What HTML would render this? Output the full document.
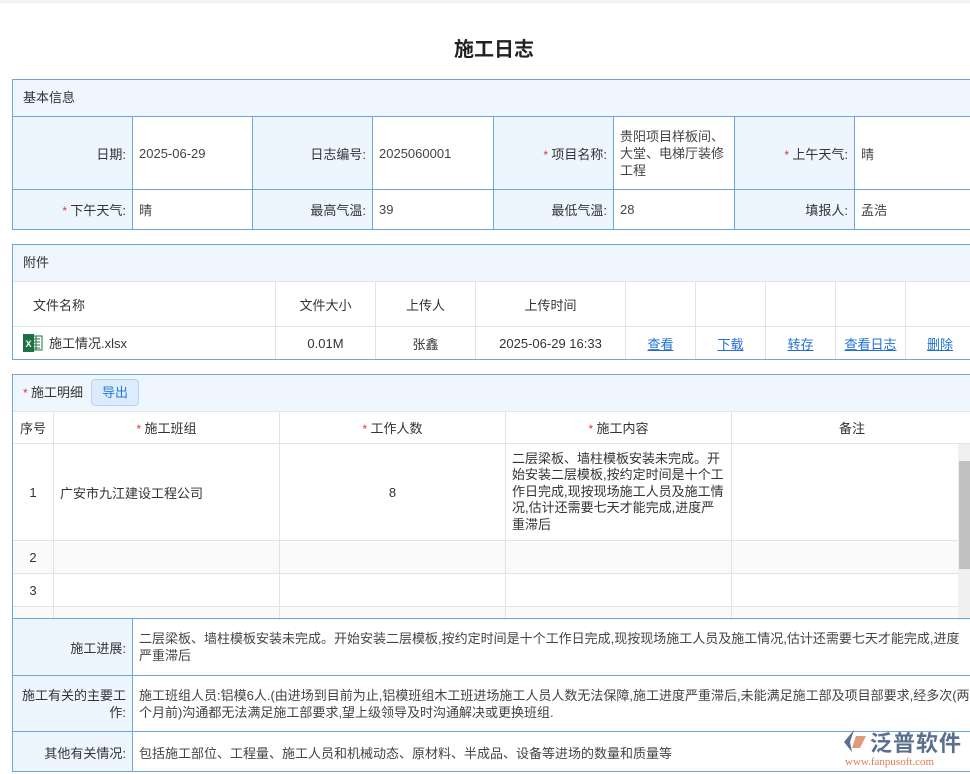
<!DOCTYPE html>
<html><head><meta charset="utf-8"><style>
*{box-sizing:border-box;margin:0;padding:0}
body{width:970px;height:774px;overflow:hidden;background:#fff;font-family:"Liberation Sans","Noto Sans CJK SC",sans-serif;font-size:13px;color:#333;position:relative}
.a{position:absolute}
.topbar{left:0;top:0;width:970px;height:3px;background:#f0f4f8}
h1{position:absolute;left:0;width:988px;top:33px;text-align:center;font-size:20px;font-weight:bold;color:#222}
.box{position:absolute;left:12px;width:962px;border:1px solid #6fa5dc;overflow:hidden}
.hd{background:#eff6fe;height:37px;line-height:36px;padding-left:10px;border-bottom:1px solid #6fa5dc}
table{border-collapse:collapse;table-layout:fixed}
td{border:1px solid #6fa5dc;vertical-align:middle}
.l{background:#edf5fe;text-align:right;padding-right:6px}
.v{padding-left:6px;color:#444}
.s{color:#e33;font-size:12px}
.t2 td{border:1px solid #e3e3e3;text-align:center}
.lk{color:#1f6fd6;text-decoration:underline}
.t3 td{border:1px solid #e3e3e3}
</style></head><body>
<div class="a topbar"></div>
<h1>施工日志</h1>

<div class="box" style="top:79px;height:151px">
<div class="hd">基本信息</div>
<table style="margin:-1px 0 0 -1px;width:960px">
<colgroup><col style="width:120px"><col style="width:120px"><col style="width:120px"><col style="width:121px"><col style="width:120px"><col style="width:121px"><col style="width:120px"><col style="width:118px"></colgroup>
<tr style="height:73px"><td class="l">日期:</td><td class="v">2025-06-29</td><td class="l">日志编号:</td><td class="v">2025060001</td><td class="l"><span class="s">* </span>项目名称:</td><td class="v" style="line-height:17px">贵阳项目样板间、大堂、电梯厅装修工程</td><td class="l"><span class="s">* </span>上午天气:</td><td class="v">晴</td></tr>
<tr style="height:40px"><td class="l"><span class="s">* </span>下午天气:</td><td class="v">晴</td><td class="l">最高气温:</td><td class="v">39</td><td class="l">最低气温:</td><td class="v">28</td><td class="l">填报人:</td><td class="v">孟浩</td></tr>
</table></div>

<div class="box" style="top:244px;height:116px">
<div class="hd">附件</div>
<table class="t2" style="margin:-1px 0 0 -1px;width:962px">
<colgroup><col style="width:263px"><col style="width:100px"><col style="width:100px"><col style="width:150px"><col style="width:70px"><col style="width:70px"><col style="width:70px"><col style="width:70px"><col style="width:69px"></colgroup>
<tr style="height:45px"><td style="text-align:left;padding-left:20px">文件名称</td><td>文件大小</td><td>上传人</td><td>上传时间</td><td></td><td></td><td></td><td></td><td></td></tr>
<tr style="height:33px"><td style="text-align:left;padding-left:10px"><svg width="20" height="20" viewBox="0 0 20 20" style="vertical-align:-5px;margin-right:6px"><rect x="7" y="3" width="12" height="14" fill="#fff" stroke="#1e7145"/><path d="M9 6h8M9 9h8M9 12h8M9 15h8M13 3v14" stroke="#1e7145" stroke-width="1"/><rect x="0" y="1" width="11" height="18" fill="#1e7145"/><text x="5.5" y="14" font-size="9" fill="#fff" text-anchor="middle" font-family="Liberation Sans" font-weight="bold">X</text></svg>施工情况.xlsx</td><td>0.01M</td><td>张鑫</td><td>2025-06-29 16:33</td><td><span class="lk">查看</span></td><td><span class="lk">下载</span></td><td><span class="lk">转存</span></td><td><span class="lk">查看日志</span></td><td><span class="lk">删除</span></td></tr>
</table></div>

<div class="box" style="top:374px;height:246px;border-bottom:none">
<div class="hd" style="border-bottom:1px solid #e3e3e3"><span class="s">* </span>施工明细<span style="display:inline-block;margin-left:8px;height:27px;line-height:25px;padding:0 10px;background:#dcecfc;border:1px solid #b7d4f0;border-radius:4px;color:#2a7ad6;vertical-align:top;margin-top:4px">导出</span></div>
<table class="t3" style="margin:-1px 0 0 -1px;width:960px">
<colgroup><col style="width:41px"><col style="width:226px"><col style="width:226px"><col style="width:226px"><col style="width:241px"></colgroup>
<tr style="height:32px;text-align:center"><td>序号</td><td><span class="s">* </span>施工班组</td><td><span class="s">* </span>工作人数</td><td><span class="s">* </span>施工内容</td><td style="vertical-align:top;padding-top:6px">备注</td></tr>
<tr style="height:97px"><td style="text-align:center">1</td><td style="padding-left:6px">广安市九江建设工程公司</td><td style="text-align:center">8</td><td style="padding:0 6px;line-height:16.5px">二层梁板、墙柱模板安装未完成。开始安装二层模板,按约定时间是十个工作日完成,现按现场施工人员及施工情况,估计还需要七天才能完成,进度严重滞后</td><td></td></tr>
<tr style="height:33px;background:#fafafa"><td style="text-align:center">2</td><td></td><td></td><td></td><td></td></tr>
<tr style="height:33px"><td style="text-align:center">3</td><td></td><td></td><td></td><td></td></tr>
<tr style="height:33px;background:#fafafa"><td style="text-align:center;vertical-align:top;padding-top:8px">4</td><td></td><td></td><td></td><td></td></tr>
</table>
<div class="a" style="left:945px;top:69px;width:13px;height:176px;background:#f0f0f0"><div style="position:absolute;left:1px;top:17px;width:11px;height:108px;background:#c1c1c1"></div></div>
</div>

<div class="box" style="top:618px;height:154px">
<table style="margin:-1px 0 0 -1px;width:960px">
<colgroup><col style="width:120px"><col></colgroup>
<tr style="height:57px"><td class="l">施工进展:</td><td class="v" style="line-height:17px">二层梁板、墙柱模板安装未完成。开始安装二层模板,按约定时间是十个工作日完成,现按现场施工人员及施工情况,估计还需要七天才能完成,进度严重滞后</td></tr>
<tr style="height:56px"><td class="l" style="line-height:17px">施工有关的主要工作:</td><td class="v" style="line-height:17px">施工班组人员:铝模6人.(由进场到目前为止,铝模班组木工班进场施工人员人数无法保障,施工进度严重滞后,未能满足施工部及项目部要求,经多次(两个月前)沟通都无法满足施工部要求,望上级领导及时沟通解决或更换班组.</td></tr>
<tr style="height:41px"><td class="l">其他有关情况:</td><td class="v">包括施工部位、工程量、施工人员和机械动态、原材料、半成品、设备等进场的数量和质量等</td></tr>
</table></div>

<div class="a" style="left:840px;top:726px;width:125px;height:44px">
<svg class="a" style="left:0;top:2px" width="28" height="26" viewBox="0 0 28 26"><path d="M14 2 L4 14 L12 24 L10 14 Z" fill="#5a6f8e"/><path d="M16 8 L26 8 L20 20 L12 20 Z" fill="#e09a7a"/></svg>
<div class="a" style="left:30px;top:0;font-size:22px;color:#5a6f8e;font-weight:bold;letter-spacing:1px;white-space:nowrap">泛普软件</div>
<div class="a" style="left:5px;top:30px;font-size:11px;color:#e07a50;font-family:'Liberation Serif',serif;white-space:nowrap">www.fanpusoft.com</div>
</div>
</body></html>
